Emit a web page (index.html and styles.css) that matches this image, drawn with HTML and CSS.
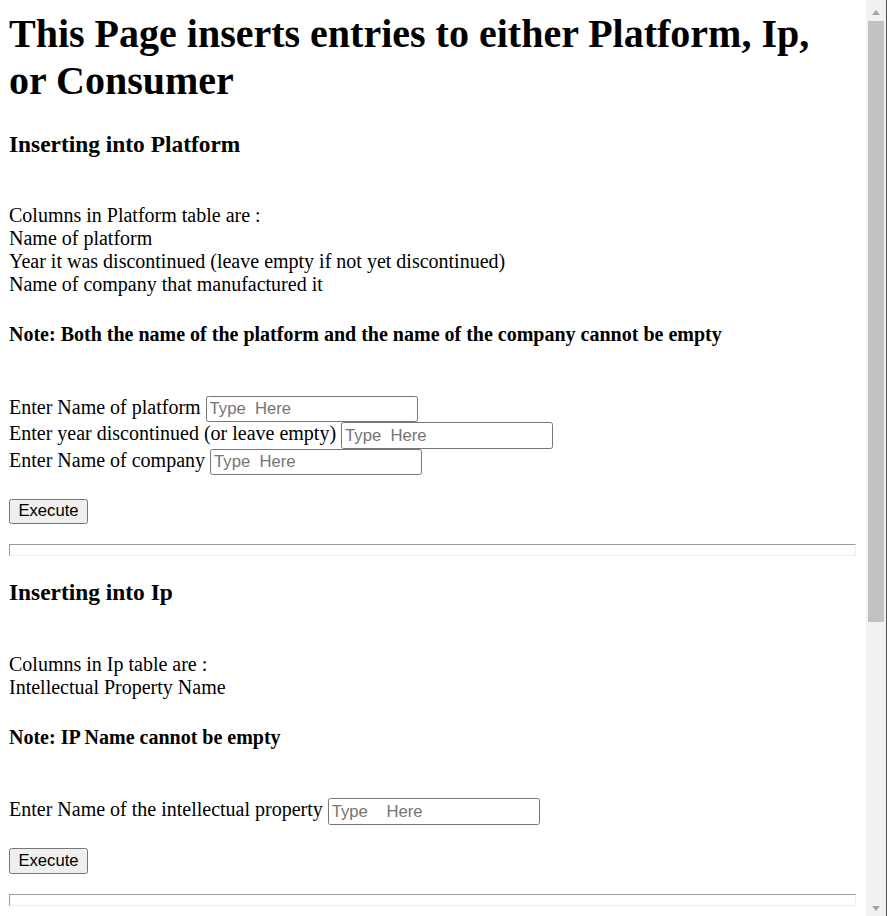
FILE: index.html
```html
<!DOCTYPE html>
<html lang="en">
<head>
<meta charset="utf-8">
<title>Insert entries</title>
<link rel="stylesheet" href="styles.css">
</head>
<body>
<div class="window">
  <main class="page">
    <h1 class="title">This Page inserts entries to either Platform, Ip, or Consumer</h1>

    <section class="section">
      <h3 class="section-title">Inserting into Platform</h3>
      <p class="columns"><br>Columns in Platform table are :<br>Name of platform<br>Year it was discontinued (leave empty if not yet discontinued)<br>Name of company that manufactured it</p>
      <h4 class="note">Note: Both the name of the platform and the name of the company cannot be empty</h4>
      <form class="entry-form">
        <br>
        Enter Name of platform <input class="field" type="text" placeholder="Type  Here"><br>
        Enter year discontinued (or leave empty) <input class="field" type="text" placeholder="Type  Here"><br>
        Enter Name of company <input class="field" type="text" placeholder="Type  Here"><br>
        <br>
        <button class="execute" type="button">Execute</button>
      </form>
      <hr class="divider">
    </section>

    <section class="section">
      <h3 class="section-title">Inserting into Ip</h3>
      <p class="columns"><br>Columns in Ip table are :<br>Intellectual Property Name</p>
      <h4 class="note">Note: IP Name cannot be empty</h4>
      <form class="entry-form">
        <br>
        Enter Name of the intellectual property <input class="field" type="text" placeholder="Type    Here"><br>
        <br>
        <button class="execute" type="button">Execute</button>
      </form>
      <hr class="divider">
    </section>
  </main>

  <div class="scrollbar" aria-hidden="true">
    <div class="scroll-btn"><span class="arrow arrow-up"></span></div>
    <div class="scroll-track"><div class="scroll-thumb"></div></div>
    <div class="scroll-btn"><span class="arrow arrow-down"></span></div>
  </div>
</div>
</body>
</html>
```

FILE: styles.css
```css
html, body {
  margin: 0;
  padding: 0;
  height: 100%;
  overflow: hidden;
  background: #ffffff;
}

.window {
  display: flex;
  height: 916px;
  width: 887px;
}

.page {
  flex: 1;
  min-width: 0;
  padding: 10px 10px 0 9px;
  overflow: hidden;
  font-family: "Liberation Serif", "Times New Roman", serif;
  font-size: 20px;
  line-height: normal;
  color: #000;
}

.title {
  font-size: 40px;
  font-weight: bold;
  margin: 0 0 26.8px 0;
}

.section-title {
  font-size: 23.4px;
  font-weight: bold;
  margin: 23.4px 0;
}

.columns {
  margin: 0;
}

.note {
  font-size: 20px;
  font-weight: bold;
  margin: 27px 0 26.6px 0;
}

.entry-form {
  margin: 0 0 20px 0;
}

.field {
  box-sizing: border-box;
  width: 212px;
  height: 26.5px;
  padding: 2px 3px;
  border: 1px solid #767676;
  border-radius: 2.5px;
  font-family: "Liberation Sans", Arial, sans-serif;
  font-size: 16.67px;
  color: #000;
  background: #fff;
  white-space: pre;
}

.field::placeholder {
  color: #757575;
  white-space: pre;
}

.execute {
  box-sizing: border-box;
  width: 79px;
  height: 25.5px;
  padding: 1px 0;
  border: 1px solid #767676;
  border-radius: 2.5px;
  background: #efefef;
  font-family: "Liberation Sans", Arial, sans-serif;
  font-size: 16.67px;
  color: #000;
}

.divider {
  box-sizing: border-box;
  height: 12px;
  margin: 10px 0;
  border-style: solid;
  border-width: 1px;
  border-color: #9a9a9a #eeeeee #eeeeee #9a9a9a;
}

.scrollbar {
  width: 20px;
  height: 916px;
  flex: none;
  display: flex;
  flex-direction: column;
  background: #f1f1f1;
  border-right: 1px solid #4e4e4e;
}

.scroll-btn {
  box-sizing: border-box;
  height: 20px;
  flex: none;
  display: flex;
  justify-content: center;
  align-items: flex-start;
  padding-top: 10px;
}

.scroll-track {
  flex: 1;
  padding: 1px 2px 0 2px;
}

.scroll-thumb {
  height: 601px;
  background: #c1c1c1;
}

.arrow {
  width: 0;
  height: 0;
  border-left: 4.5px solid transparent;
  border-right: 4.5px solid transparent;
}

.arrow-up {
  border-bottom: 5px solid #a3a3a3;
}

.arrow-down {
  border-top: 5px solid #a3a3a3;
}
```
